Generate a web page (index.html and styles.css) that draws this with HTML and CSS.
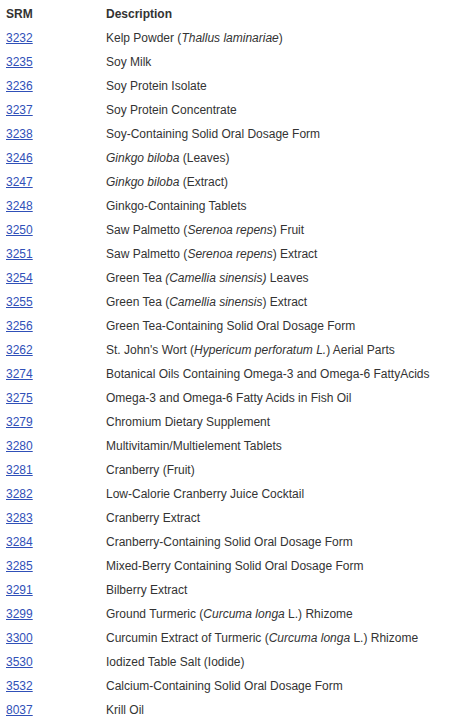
FILE: index.html
```html
<!DOCTYPE html>
<html>
<head>
<meta charset="utf-8">
<link rel="stylesheet" href="styles.css">
</head>
<body>
<table class="srm-table">
<thead>
<tr><th class="col-srm">SRM</th><th class="col-desc">Description</th></tr>
</thead>
<tbody>
<tr><td class="col-srm"><a href="#">3232</a></td><td class="col-desc">Kelp Powder (<i>Thallus laminariae</i>)</td></tr>
<tr><td class="col-srm"><a href="#">3235</a></td><td class="col-desc">Soy Milk</td></tr>
<tr><td class="col-srm"><a href="#">3236</a></td><td class="col-desc">Soy Protein Isolate</td></tr>
<tr><td class="col-srm"><a href="#">3237</a></td><td class="col-desc">Soy Protein Concentrate</td></tr>
<tr><td class="col-srm"><a href="#">3238</a></td><td class="col-desc">Soy-Containing Solid Oral Dosage Form</td></tr>
<tr><td class="col-srm"><a href="#">3246</a></td><td class="col-desc"><i>Ginkgo biloba</i> (Leaves)</td></tr>
<tr><td class="col-srm"><a href="#">3247</a></td><td class="col-desc"><i>Ginkgo biloba</i> (Extract)</td></tr>
<tr><td class="col-srm"><a href="#">3248</a></td><td class="col-desc">Ginkgo-Containing Tablets</td></tr>
<tr><td class="col-srm"><a href="#">3250</a></td><td class="col-desc">Saw Palmetto (<i>Serenoa repens</i>) Fruit</td></tr>
<tr><td class="col-srm"><a href="#">3251</a></td><td class="col-desc">Saw Palmetto (<i>Serenoa repens</i>) Extract</td></tr>
<tr><td class="col-srm"><a href="#">3254</a></td><td class="col-desc">Green Tea <i>(Camellia sinensis)</i> Leaves</td></tr>
<tr><td class="col-srm"><a href="#">3255</a></td><td class="col-desc">Green Tea (<i>Camellia sinensis</i>) Extract</td></tr>
<tr><td class="col-srm"><a href="#">3256</a></td><td class="col-desc">Green Tea-Containing Solid Oral Dosage Form</td></tr>
<tr><td class="col-srm"><a href="#">3262</a></td><td class="col-desc">St. John's Wort (<i>Hypericum perforatum L.</i>) Aerial Parts</td></tr>
<tr><td class="col-srm"><a href="#">3274</a></td><td class="col-desc">Botanical Oils Containing Omega-3 and Omega-6 FattyAcids</td></tr>
<tr><td class="col-srm"><a href="#">3275</a></td><td class="col-desc">Omega-3 and Omega-6 Fatty Acids in Fish Oil</td></tr>
<tr><td class="col-srm"><a href="#">3279</a></td><td class="col-desc">Chromium Dietary Supplement</td></tr>
<tr><td class="col-srm"><a href="#">3280</a></td><td class="col-desc">Multivitamin/Multielement Tablets</td></tr>
<tr><td class="col-srm"><a href="#">3281</a></td><td class="col-desc">Cranberry (Fruit)</td></tr>
<tr><td class="col-srm"><a href="#">3282</a></td><td class="col-desc">Low-Calorie Cranberry Juice Cocktail</td></tr>
<tr><td class="col-srm"><a href="#">3283</a></td><td class="col-desc">Cranberry Extract</td></tr>
<tr><td class="col-srm"><a href="#">3284</a></td><td class="col-desc">Cranberry-Containing Solid Oral Dosage Form</td></tr>
<tr><td class="col-srm"><a href="#">3285</a></td><td class="col-desc">Mixed-Berry Containing Solid Oral Dosage Form</td></tr>
<tr><td class="col-srm"><a href="#">3291</a></td><td class="col-desc">Bilberry Extract</td></tr>
<tr><td class="col-srm"><a href="#">3299</a></td><td class="col-desc">Ground Turmeric (<i>Curcuma longa</i> L.) Rhizome</td></tr>
<tr><td class="col-srm"><a href="#">3300</a></td><td class="col-desc">Curcumin Extract of Turmeric (<i>Curcuma longa</i> L.) Rhizome</td></tr>
<tr><td class="col-srm"><a href="#">3530</a></td><td class="col-desc">Iodized Table Salt (Iodide)</td></tr>
<tr><td class="col-srm"><a href="#">3532</a></td><td class="col-desc">Calcium-Containing Solid Oral Dosage Form</td></tr>
<tr><td class="col-srm"><a href="#">8037</a></td><td class="col-desc">Krill Oil</td></tr>
</tbody>
</table>
</body>
</html>
```
FILE: styles.css
```css
html, body {
  margin: 0;
  padding: 0;
  background: #ffffff;
}
body {
  font-family: "Liberation Sans", Arial, sans-serif;
  font-size: 12px;
  color: #333333;
  padding-top: 2px;
}
.srm-table {
  border-collapse: collapse;
  border-spacing: 0;
}
.srm-table th,
.srm-table td {
  height: 24px;
  padding: 0;
  text-align: left;
  vertical-align: middle;
  line-height: 14px;
  white-space: nowrap;
}
.srm-table th {
  font-weight: bold;
}
.srm-table .col-srm {
  width: 106px;
  padding-left: 6px;
  box-sizing: border-box;
}
.col-desc {
  padding-left: 0;
}
.srm-table a {
  color: #3050b8;
  text-decoration: underline;
}
```
